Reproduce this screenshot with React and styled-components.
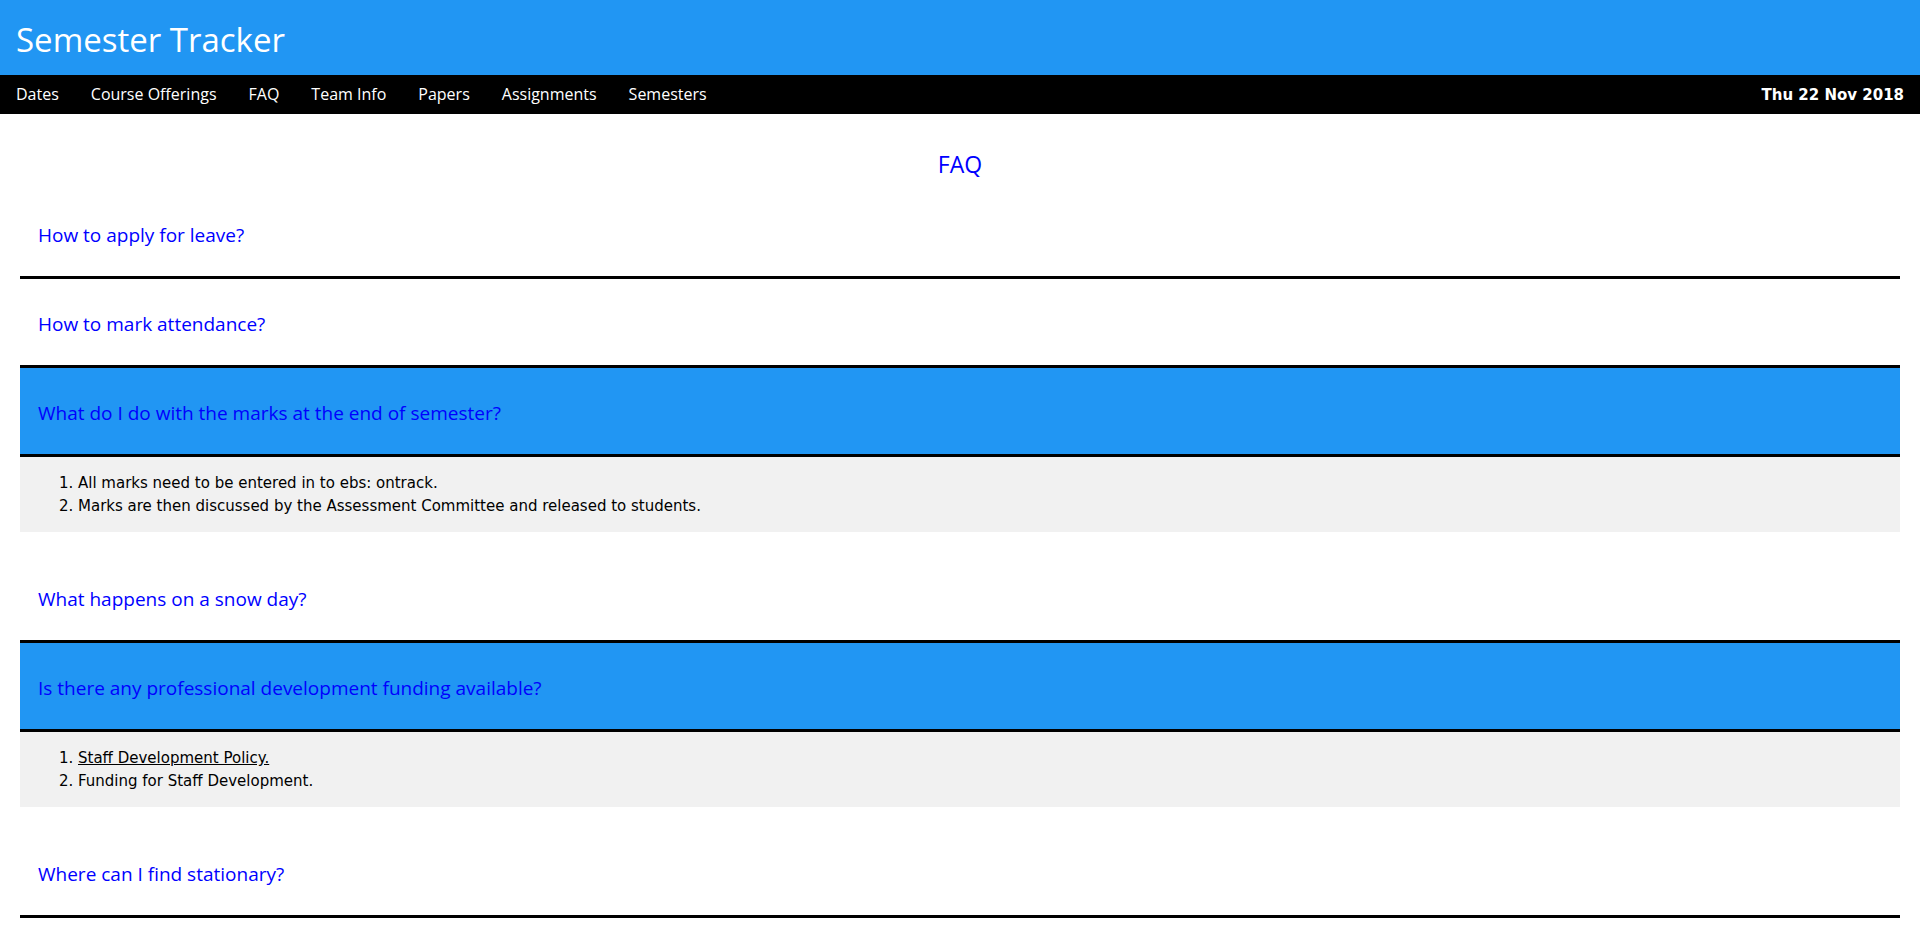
import { useState } from "react";
import styled, { createGlobalStyle } from "styled-components";

const GlobalStyle = createGlobalStyle`
    html, body {
        margin: 0;
        padding: 0;
    }
    body {
        font-family: "Open Sans", "Noto Sans", sans-serif;
        background: #fff;
    }
`

const Header = styled.header`
    background: #2196F3;
    height: 75px;
    display: flex;
    align-items: center;
    padding: 4px 16px 0;
    box-sizing: border-box;
`

const Title = styled.h1`
    margin: 0;
    color: #fff;
    font-weight: 400;
    font-size: 33px;
`

const Nav = styled.nav`
    background: #000;
    height: 39px;
    display: flex;
    align-items: center;
`

const NavLink = styled.a`
    color: #fff;
    padding: 0 16px;
    font-size: 16px;
    line-height: 39px;
    text-decoration: none;
    cursor: pointer;
`

const Today = styled.span`
    margin-left: auto;
    padding-right: 16px;
    color: #fff;
    font-family: "DejaVu Sans", Verdana, sans-serif;
    font-weight: 700;
    font-size: 15px;
`

const Main = styled.main`
    padding: 0 20px 170px;
`

const PageTitle = styled.h2`
    margin: 34px 0 10px;
    text-align: center;
    color: blue;
    font-weight: 400;
    font-size: 23px;
    line-height: 32px;
`

const Question = styled.div`
    height: 89px;
    display: flex;
    align-items: center;
    padding: 3px 18px 0;
    box-sizing: border-box;
    font-size: 19px;
    color: blue;
    cursor: pointer;
    background: ${props => props.$open ? "#2196F3" : "#fff"};
    border-bottom: 3px solid #000;
`

const Panel = styled.div`
    background: #f1f1f1;
    padding: 0 18px;
    margin-bottom: 22px;
`

const Answers = styled.ol`
    margin: 0;
    padding: 15px 0 15px 40px;
    font-family: "DejaVu Sans", Verdana, sans-serif;
    font-size: 15px;
    line-height: 22.5px;
    color: #000;
`

const Link = styled.a`
    color: inherit;
    text-decoration: underline;
`

const links = ["Dates", "Course Offerings", "FAQ", "Team Info", "Papers", "Assignments", "Semesters"]

const faqs = [
    { q: "How to apply for leave?", a: [] },
    { q: "How to mark attendance?", a: [] },
    {
        q: "What do I do with the marks at the end of semester?",
        a: [
            "All marks need to be entered in to ebs: ontrack.",
            "Marks are then discussed by the Assessment Committee and released to students.",
        ],
    },
    { q: "What happens on a snow day?", a: [] },
    {
        q: "Is there any professional development funding available?",
        a: [<Link href="#">Staff Development Policy.</Link>, "Funding for Staff Development."],
    },
    { q: "Where can I find stationary?", a: [] },
]

const App = () => {
    const [open, setOpen] = useState([2, 4])

    const toggle = (i) => {
        setOpen(open.includes(i) ? open.filter(x => x !== i) : [...open, i])
    }

    return (
        <>
            <GlobalStyle />
            <Header>
                <Title>Semester Tracker</Title>
            </Header>
            <Nav>
                {links.map(l => <NavLink key={l}>{l}</NavLink>)}
                <Today>Thu 22 Nov 2018</Today>
            </Nav>
            <Main>
                <PageTitle>FAQ</PageTitle>
                {faqs.map((f, i) => (
                    <div key={f.q}>
                        <Question $open={open.includes(i)} onClick={() => toggle(i)}>{f.q}</Question>
                        {open.includes(i) && f.a.length > 0 && (
                            <Panel>
                                <Answers>
                                    {f.a.map((item, j) => <li key={j}>{item}</li>)}
                                </Answers>
                            </Panel>
                        )}
                    </div>
                ))}
            </Main>
        </>
    )
}

export default App
